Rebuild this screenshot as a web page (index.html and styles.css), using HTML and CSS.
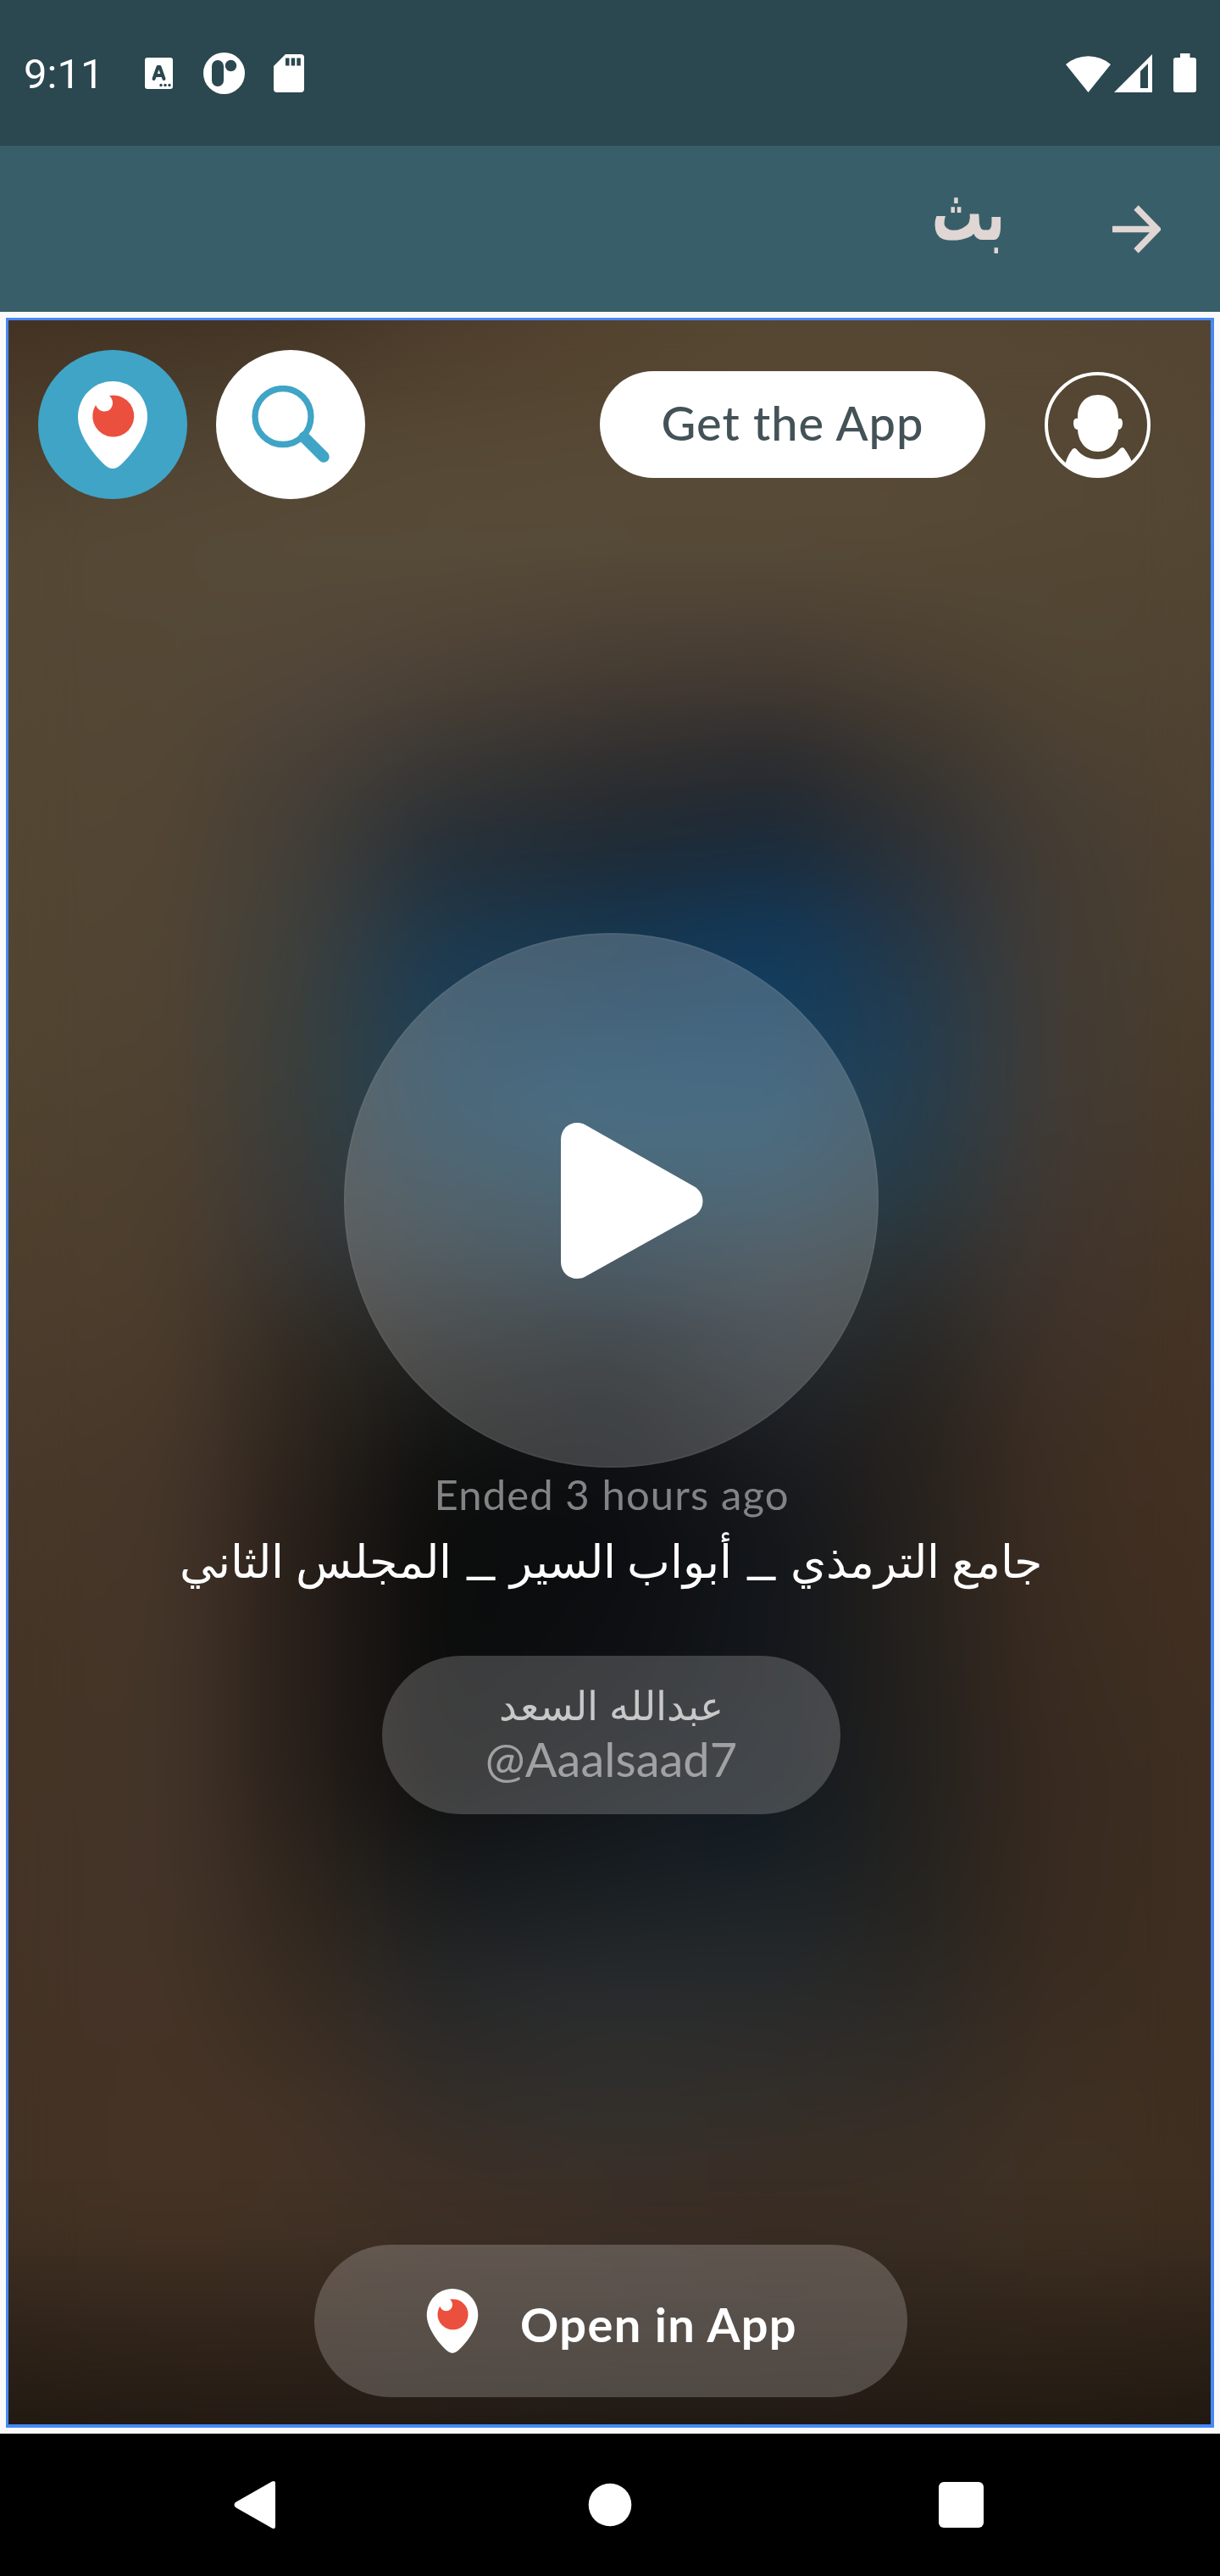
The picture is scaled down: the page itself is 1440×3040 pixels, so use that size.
FILE: index.html
```html
<!DOCTYPE html>
<html lang="ar">
<head>
<meta charset="utf-8">
<title>بث</title>
<link rel="stylesheet" href="styles.css">
</head>
<body>
<svg width="0" height="0" class="defs" aria-hidden="true">
  <symbol id="pin" viewBox="0 0 82 103">
    <path fill="#fff" d="M41 0C18 0 0 19 0 42c0 19 15 41 32 57q9 8 18 0c17-16 32-38 32-57C82 19 64 0 41 0z"/>
    <path fill="#eb4f3d" d="M37 17a24.500 24.500 0 1 1-16 11c2 5 6 7.500 10.500 7.500 6 0 9.500-5 9.500-10 0-4-2-6.500-4-8.500z"/>
  </symbol>
</svg>
<div class="phone">
  <header class="status">
    <span class="clock">9:11</span>
    <svg class="ic-a" width="34" height="37" viewBox="0 0 34 37"><rect width="33" height="37" rx="3" fill="#fff"/><path d="M10.500 25 15.500 11h2L22.500 25M12.500 21h8" fill="none" stroke="#2b474f" stroke-width="4" stroke-linecap="round" stroke-linejoin="round"/><g fill="#2b474f"><circle cx="19" cy="32.500" r="1.700"/><circle cx="24" cy="32.500" r="1.700"/><circle cx="29" cy="32.500" r="1.700"/></g></svg>
    <svg class="ic-p" width="49" height="49" viewBox="0 0 49 49"><circle cx="24.500" cy="24.500" r="24.500" fill="#fff"/><rect x="10" y="9" width="14" height="31" rx="7" fill="#2b474f"/><circle cx="32.500" cy="15.500" r="6.700" fill="#2b474f"/></svg>
    <svg class="ic-sd" width="36" height="45" viewBox="0 0 36 45"><path fill="#fff" d="M14 0h18a4 4 0 0 1 4 4v37a4 4 0 0 1-4 4H4a4 4 0 0 1-4-4V14z"/><path d="M14 4.500h4.500v9H14zm6.700 0h4.500v9h-4.500zm6.600 0h4.500v9h-4.500z" fill="#2b474f"/></svg>
    <svg class="ic-wifi" width="53" height="45" viewBox="0 0 53 45"><path fill="#fff" d="M0 12a41 41 0 0 1 53 0L26.500 45z"/></svg>
    <svg class="ic-cell" width="45" height="45" viewBox="0 0 45 45"><path fill="#fff" fill-rule="evenodd" d="M45 0v45H0zM31 20v20h9V11z"/></svg>
    <svg class="ic-bat" width="27" height="46" viewBox="0 0 27 46"><path fill="#fff" d="M8 0h11.500v5H24a3 3 0 0 1 3 3v35a3 3 0 0 1-3 3H3a3 3 0 0 1-3-3V8a3 3 0 0 1 3-3h5z"/></svg>
  </header>
  <div class="appbar" dir="rtl">
    <svg width="57" height="57" viewBox="0 0 57 57"><path d="M0 28.500h50M28 3l25 25.500L28 54" fill="none" stroke="#e0d6d4" stroke-width="7.500"/></svg>
    <h1 class="appbar-title">بث</h1>
  </div>
  <main class="frame">
    <div class="stage">
      <div class="backdrop">
        <i class="c0"></i><i class="c1"></i><i class="c2"></i><i class="c3"></i><i class="c4"></i><i class="c5"></i><i class="c6"></i><i class="c7"></i><i class="c8"></i>
      </div>
      <nav class="top">
        <a class="round brand"><svg width="82" height="103"><use href="#pin"/></svg></a>
        <a class="round search"><svg width="92" height="92" viewBox="0 0 92 92"><circle cx="37" cy="36.500" r="33" fill="none" stroke="#40a4c6" stroke-width="7.300"/><path d="M62 61l23 23" stroke="#40a4c6" stroke-width="13.500" stroke-linecap="round"/></svg></a>
        <a class="get"><span>Get the App</span></a>
        <svg class="avatar" width="125" height="125" viewBox="0 0 125 125"><circle cx="62.500" cy="62.500" r="60.500" fill="none" stroke="#fff" stroke-width="4"/><path fill="#fff" d="M63 27c15 0 24 11 24 26v2c3-1 5 1 5 5 0 5-2 8-5 8-1 15-10 26-24 26S40 83 39 68c-3 0-5-3-5-8 0-4 2-6 5-5v-2c0-15 9-26 24-26zM24.500 108c2-7 4-11 7-15 1.500-3 4-4 6-2 6 8 15 12 25 12 11 0 20-4 26-12 2-2.500 5-2 6 0 3 4 6 9 8 14-9 11-23 18-40 18-15 0-29-5-38-15z"/></svg>
      </nav>
      <a class="play"><svg width="170" height="186" viewBox="0 0 170 186"><path fill="#fff" d="M1 21C1 5 16-3 29 3l129 73c14 8 14 27 0 35L29 183c-13 6-28-2-28-18z"/></svg></a>
      <p class="ended"><span>Ended 3 hours ago</span></p>
      <p class="title" dir="rtl"><span>جامع الترمذي <b>_</b> أبواب السير <b>_</b> المجلس الثاني</span></p>
      <a class="user">
        <span class="name" dir="rtl">عبدالله السعد</span>
        <span class="handle">@Aaalsaad7</span>
      </a>
      <a class="open"><svg width="62" height="76"><use href="#pin"/></svg><span>Open in App</span></a>
    </div>
  </main>
  <footer class="keys">
    <svg width="50" height="58" viewBox="0 0 50 58"><path fill="#fff" d="M45 1.500q4-2 4 2.500v50q0 4.500-4 2.500L2 32q-3-3 0-6z"/></svg>
    <svg class="home" width="52" height="52" viewBox="0 0 52 52"><circle cx="26" cy="26" r="25.300" fill="#fff"/></svg>
    <svg width="53" height="54" viewBox="0 0 53 54"><rect width="53" height="54" rx="6" fill="#fff"/></svg>
  </footer>
</div>
</body>
</html>
```
FILE: styles.css
```css
* { box-sizing: border-box; margin: 0; padding: 0; }
body { background: #000; font-family: Lato, "Noto Sans", sans-serif; }
.defs { position: absolute; }
svg { display: block; flex: none; }
.phone { width: 1440px; height: 3040px; display: flex; flex-direction: column; }

.status { height: 172px; background: #2b474f; display: flex; align-items: center; padding: 0 28px; }
.clock { font: 49px/56px Roboto, sans-serif; color: #fff; width: 143px; padding-top: 3px; }
.ic-p { margin-left: 35px; }
.ic-sd { margin-left: 34px; }
.ic-wifi { margin-left: auto; }
.ic-cell { margin-left: 4px; }
.ic-bat { margin-left: 25px; }

.appbar { height: 196px; background: #385f69; display: flex; align-items: center; padding-right: 70px; }
.appbar-title { font: bold 64px/80px "DejaVu Sans", sans-serif; color: #e0d6d4; margin-right: 124px; padding-bottom: 27px; transform: scale(.94, 1.45); }

.frame { height: 2504px; padding: 7px; background: #fafafa; }
.stage { position: relative; height: 2490px; border: solid #4589f8; border-width: 3px 4px 4px 3px; display: flex; flex-direction: column; overflow: hidden; }

/* Blurred video still: vertical colour columns, each cross-faded into the next */
.backdrop { position: absolute; inset: 0; }
.backdrop i { position: absolute; inset: 0; }
.backdrop::after { content: ""; position: absolute; inset: 0; backdrop-filter: blur(36px); background: linear-gradient(transparent 2190px, rgba(0,0,0,.05) 2260px, rgba(0,0,0,.25) 2360px, rgba(0,0,0,.48) 2483px); }
.c0 { background: linear-gradient(#443222 0, #4d3d2b 122px, #554936 272px, #544734 522px, #524531 822px, #4e3f2d 1122px, #4a3a2b 1322px, #453526 1572px, #443427 1822px, #433325 2122px, #423224 2483px); }
.c1 { background: linear-gradient(#413223 0, #4f4130 122px, #564a37 242px, #534634 522px, #504333 822px, #4c3d2d 1122px, #46362a 1372px, #443529 1622px, #443429 1822px, #463425 2122px, #453426 2483px); mask-image: linear-gradient(to right, transparent 0, #000 190px); }
.c2 { background: linear-gradient(#443425 0, #524532 122px, #574b38 242px, #52463a 422px, #443e37 572px, #3b3f3d 772px, #383e3c 922px, #383838 1072px, #302921 1222px, #271e19 1422px, #271f1a 1722px, #33291f 1922px, #433226 2122px, #453427 2483px); mask-image: linear-gradient(to right, transparent 190px, #000 350px); }
.c3 { background: linear-gradient(#4e3c2c 0, #554733 122px, #584c39 262px, #4c4136 422px, #393734 522px, #263038 622px, #1b3c54 772px, #1f445b 922px, #2a3b43 1072px, #1e201f 1222px, #0d0e0d 1372px, #0b0c0c 1522px, #0e0e0e 1722px, #16191a 1822px, #272829 1972px, #352e28 2122px, #403127 2222px, #423428 2483px); mask-image: linear-gradient(to right, transparent 350px, #000 510px); }
.c4 { background: linear-gradient(#53432f 0, #564834 122px, #584c39 252px, #463c33 422px, #302f2f 522px, #1f2a34 622px, #17354d 712px, #163e5a 822px, #1d4a68 922px, #1f4457 1022px, #1f313e 1122px, #141a1d 1222px, #0e1114 1322px, #0c0d10 1422px, #0e1013 1622px, #161c21 1822px, #292c2e 1972px, #33302c 2122px, #3c3028 2222px, #403328 2483px); mask-image: linear-gradient(to right, transparent 510px, #000 710px); }
.c5 { background: linear-gradient(#564733 0, #584b37 172px, #574b38 262px, #443a32 422px, #2a2b2e 522px, #1a2b3b 622px, #12395a 722px, #143f60 822px, #1c4866 922px, #234558 1022px, #2b3740 1122px, #222a30 1222px, #1c1e22 1322px, #14171b 1422px, #14181d 1622px, #141c22 1772px, #23282b 1922px, #312e2a 2072px, #3b2e25 2222px, #403227 2483px); mask-image: linear-gradient(to right, transparent 710px, #000 910px); }
.c6 { background: linear-gradient(#564733 0, #574a36 252px, #4a3f32 422px, #39352f 522px, #2d3136 622px, #263644 722px, #233c4f 822px, #263e4e 922px, #293b44 1022px, #2c3131 1122px, #282725 1222px, #27221e 1322px, #25211d 1522px, #23211e 1722px, #252420 1872px, #2f2b27 2022px, #3a2f26 2172px, #423325 2483px); mask-image: linear-gradient(to right, transparent 910px, #000 1070px); }
.c7 { background: linear-gradient(#554633 0, #554935 222px, #504433 422px, #443c34 622px, #423c35 772px, #413b35 922px, #403630 1072px, #3d2e23 1322px, #3b2c21 1522px, #382a20 1722px, #392b20 1922px, #3e3023 2122px, #433324 2483px); mask-image: linear-gradient(to right, transparent 1070px, #000 1230px); }
.c8 { background: linear-gradient(#544533 0, #544733 222px, #4f4231 522px, #4b3d2c 822px, #463525 1122px, #433122 1422px, #3f2f22 1722px, #3f2f21 2122px, #403022 2483px); mask-image: linear-gradient(to right, transparent 1230px, #000 1419px); }

.top, .play, .ended, .title, .user, .open { position: relative; flex: none; }
.top { display: flex; align-items: center; height: 176px; margin-top: 35px; padding: 0 71px 0 35px; }
.round { width: 176px; height: 176px; border-radius: 50%; display: flex; align-items: center; justify-content: center; }
.brand { background: #40a4c6; }
.search { background: #fff; margin-left: 34px; }
.get { margin-left: auto; width: 455px; height: 126px; border-radius: 63px; background: #fff; color: #435257; font-size: 56px; font-weight: 500; letter-spacing: 1px; display: flex; align-items: center; justify-content: center; padding-bottom: 5px; }
.avatar { margin-left: 70px; }
.play { width: 631px; height: 631px; margin: 512px 0 0 396px; border-radius: 50%; background: rgba(255,255,255,.2); border: 2px solid rgba(255,255,255,.04); display: flex; align-items: center; justify-content: center; padding-left: 49px; }
.ended { height: 64px; line-height: 62px; text-align: center; font-size: 49px; letter-spacing: 1.100px; color: #828384; padding-left: 5px; }
.title { height: 100px; line-height: 92px; text-align: center; font-size: 54px; color: #fff; white-space: nowrap; padding-left: 3px; }
.title b { display: inline-block; margin: 0 8px; line-height: 1; transform: translateY(-5px) scaleX(1.6); }
.title span, .name, .handle, .ended span, .get span, .open span { display: inline-block; }
.user { width: 541px; height: 187px; margin: 58px 0 0 441px; border-radius: 94px; background: rgba(255,255,255,.2); display: flex; flex-direction: column; align-items: center; }
.name { font-size: 47px; line-height: 64px; margin-top: 26px; color: #c8c8c8; }
.handle { font-size: 56px; line-height: 64px; color: #a0a1a2; }
.open { width: 700px; height: 180px; margin: 508px 0 0 361px; border-radius: 90px; background: rgba(255,255,255,.2); display: flex; align-items: center; padding-left: 132px; color: #fff; font-size: 56px; font-weight: 700; letter-spacing: 1.400px; }
.open span { margin-left: 49px; padding-top: 6px; }

.keys { height: 168px; background: #000; display: flex; align-items: center; justify-content: space-between; padding: 0 279px 0 276px; }
.home { margin-left: 6px; }
```
